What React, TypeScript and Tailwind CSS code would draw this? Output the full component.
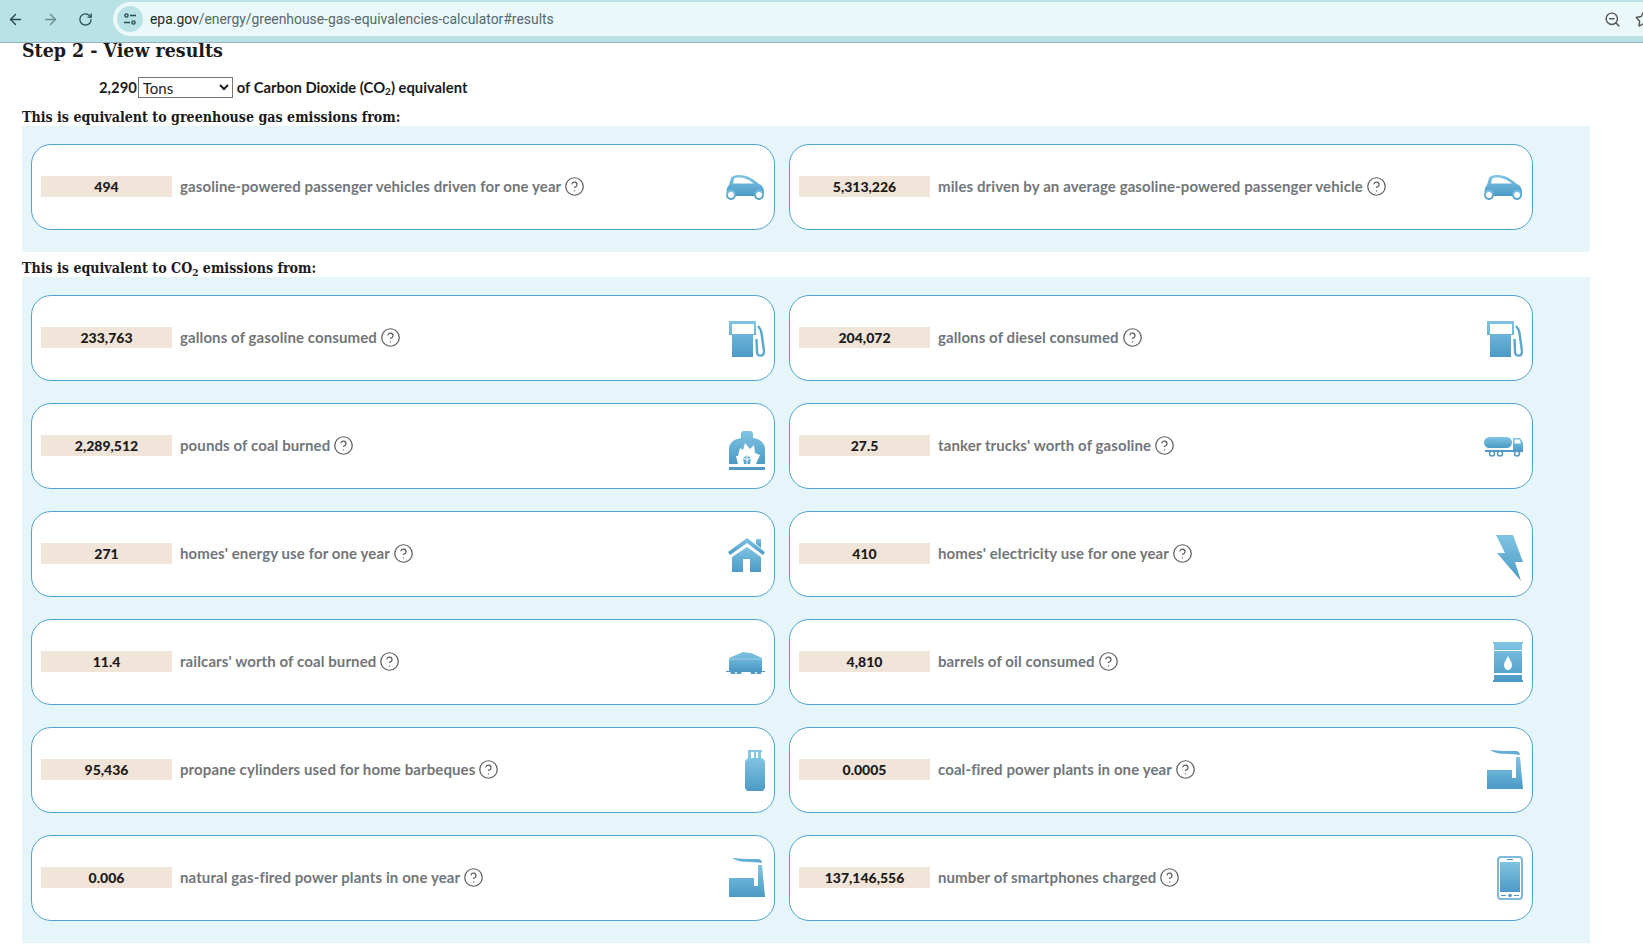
import React, { useId } from 'react';
import { ArrowLeft, ArrowRight, CircleHelp, RotateCw, Star, ZoomOut } from 'lucide-react';

type GlyphType = {
  w: number;
  h: number;
  className?: string;
  render: (fill: string) => React.ReactNode;
};

// every pictogram uses the same light-to-dark blue fade
const Glyph = (props: GlyphType) => {
  const { w, h, className, render } = props;
  const id = useId();
  return (
    <svg width={w} height={h} viewBox={`0 0 ${w} ${h}`} className={`ml-auto shrink-0 ${className ?? ''}`}>
      <defs>
        <linearGradient id={id} x1="0" y1="0" x2="0" y2="1">
          <stop offset="0" stopColor="#80c4e3" />
          <stop offset="1" stopColor="#4b9ac6" />
        </linearGradient>
      </defs>
      {render(`url(#${id})`)}
    </svg>
  );
};

const Car = () => (
  <Glyph
    w={39}
    h={25}
    className="mt-[3px]"
    render={(f) => (
      <>
        <path d="M1 21C0 15 1 12 3 10L5 3C6 1 9 0 13 0C22 0 27 4 33 9C36 10 38 13 38 17L38 20L36 21H3Z" fill={f} />
        <path d="M8 4C8 3 10 2.5 13 2.5C19 2.5 23 5 28 8.5L7 8.5Z" fill="#fff" />
        <circle cx="5" cy="20" r="5" fill={f} />
        <circle cx="5" cy="20" r="3" fill="#fff" />
        <circle cx="33" cy="20" r="5" fill={f} />
        <circle cx="33" cy="20" r="3" fill="#fff" />
      </>
    )}
  />
);

const Pump = () => (
  <Glyph
    w={36}
    h={37}
    className="mt-[5px]"
    render={(f) => (
      <>
        <path d="M0 0H27V14H24V36H3V14H0ZM3 3V13H25V3Z" fill={f} fillRule="evenodd" />
        <path d="M29 5C31 7 32 9 32.5 12L35 30C35.5 36 28 36 28 31L27.5 18" fill="none" stroke="#5ca5ce" strokeWidth="2.4" />
      </>
    )}
  />
);

const Fireplace = () => (
  <Glyph
    w={36}
    h={39}
    className="mt-[10px]"
    render={(f) => (
      <>
        <path d="M12 3C12 1 13 0 15 0H21C23 0 24 1 24 3V7C30 8 36 11 36 18V33H0V18C0 11 6 8 12 7Z" fill={f} />
        <rect x="0" y="36" width="36" height="3" fill="#5199c4" />
        <path d="M16 12L21 18L25 14L26 22L31 24L27 33H9L7 25L9 25L11 17L14 19Z" fill="#fff" />
        <path d="M18 24L22 27L21 33H15L14 27Z" fill={f} />
        <path d="M18 24V33M14 27L18 29L22 27" stroke="#fff" strokeWidth="1" fill="none" />
      </>
    )}
  />
);

const Truck = () => (
  <Glyph
    w={39}
    h={20}
    className="mt-[4px]"
    render={(f) => (
      <>
        <rect x="0" y="0" width="28" height="11" rx="5.5" fill={f} />
        <path d="M29 1H36L39 6V15H29Z" fill={f} />
        <path d="M30.5 2.5H35.5L37 6.5H30.5Z" fill="#fff" />
        <rect x="1" y="13" width="38" height="2" fill="#5199c4" />
        {[8, 16, 33].map((x) => (
          <g key={x}>
            <circle cx={x} cy="16.5" r="3.2" fill="#5199c4" />
            <circle cx={x} cy="16.5" r="1.7" fill="#fff" />
          </g>
        ))}
      </>
    )}
  />
);

const House = () => (
  <Glyph
    w={37}
    h={35}
    className="mt-[4px]"
    render={(f) => (
      <>
        <path d="M28 1H33V10L28 6Z" fill={f} />
        <path d="M0 14L19 0L37 14L35 17L19 5L2 17Z" fill={f} />
        <path d="M19 9L33 19V34H22V21H15V34H4V19Z" fill={f} />
      </>
    )}
  />
);

const Bolt = () => (
  <Glyph
    w={27}
    h={47}
    className="mt-[10px]"
    render={(f) => <path d="M0 0H17L27 27H19L25 46L1 18H9Z" fill={f} />}
  />
);

const Railcar = () => (
  <Glyph
    w={39}
    h={22}
    className="mt-[4px]"
    render={(f) => (
      <>
        <path d="M3 6L17 0L25 1L36 6V19H3Z" fill={f} />
        <path d="M3 7H36" stroke="#fff" strokeOpacity="0.35" strokeWidth="1" />
        <rect x="0" y="19" width="39" height="1" fill="#5199c4" />
        {[7, 13, 27, 33].map((x) => (
          <rect key={x} x={x - 2.5} y="20" width="5" height="2" rx="1" fill="#5199c4" />
        ))}
      </>
    )}
  />
);

const Barrel = () => (
  <Glyph
    w={30}
    h={40}
    className="mt-[2px]"
    render={(f) => (
      <>
        <path d="M0 0H30V2H29V8H1V2H0ZM1 9H29V31H1ZM1 33H29V38H30V40H0V38H1Z" fill={f} />
        <path d="M15 14C17 18 19 20 19 23C19 26 17 28 15 28C13 28 11 26 11 23C11 20 13 18 15 14Z" fill="#fff" />
      </>
    )}
  />
);

const Propane = () => (
  <Glyph
    w={20}
    h={41}
    className="mt-[2px]"
    render={(f) => (
      <>
        <path d="M3 0H17V2H16V8H13V2H11V8H9V2H6V8H3Z" fill="#86c6e3" />
        <path d="M5 8H15C18 8 20 10 20 13V38L18 41H2L0 38V13C0 10 2 8 5 8Z" fill={f} />
      </>
    )}
  />
);

const Factory = () => (
  <Glyph
    w={36}
    h={40}
    className="mt-[2px]"
    render={(f) => (
      <>
        <path d="M3 0C12 1 22 1 28 1C32 1 33 3 33 5C25 3 11 6 3 0Z" fill="#63aed6" />
        <path d="M0 20H25V28H29L29 7H33L36 39H0Z" fill={f} />
      </>
    )}
  />
);

const Phone = () => (
  <Glyph
    w={26}
    h={44}
    className="mt-[2px]"
    render={(f) => (
      <>
        <rect x="1" y="1" width="24" height="42" rx="3" fill="#fff" stroke="#7db9da" strokeWidth="2" />
        <rect x="3" y="6" width="20" height="30" fill={f} />
        <rect x="10" y="3" width="6" height="1" fill="#5199c4" />
        <rect x="4" y="39" width="5" height="1" fill="#5199c4" />
        <circle cx="13" cy="39.5" r="1.8" fill="#5199c4" />
        <rect x="17" y="39" width="5" height="1" fill="#5199c4" />
      </>
    )}
  />
);

type Row = { value: string; label: string; icon: React.ReactNode };

const ghgRows: Row[] = [
  { value: '494', label: 'gasoline-powered passenger vehicles driven for one year', icon: <Car /> },
  { value: '5,313,226', label: 'miles driven by an average gasoline-powered passenger vehicle', icon: <Car /> },
];

const co2Rows: Row[] = [
  { value: '233,763', label: 'gallons of gasoline consumed', icon: <Pump /> },
  { value: '204,072', label: 'gallons of diesel consumed', icon: <Pump /> },
  { value: '2,289,512', label: 'pounds of coal burned', icon: <Fireplace /> },
  { value: '27.5', label: "tanker trucks' worth of gasoline", icon: <Truck /> },
  { value: '271', label: "homes' energy use for one year", icon: <House /> },
  { value: '410', label: "homes' electricity use for one year", icon: <Bolt /> },
  { value: '11.4', label: "railcars' worth of coal burned", icon: <Railcar /> },
  { value: '4,810', label: 'barrels of oil consumed', icon: <Barrel /> },
  { value: '95,436', label: 'propane cylinders used for home barbeques', icon: <Propane /> },
  { value: '0.0005', label: 'coal-fired power plants in one year', icon: <Factory /> },
  { value: '0.006', label: 'natural gas-fired power plants in one year', icon: <Factory /> },
  { value: '137,146,556', label: 'number of smartphones charged', icon: <Phone /> },
];

const Panel = ({ rows }: { rows: Row[] }) => (
  <div className="w-[1568px] bg-[#e5f5fa] pl-[9px] pt-[18px] pb-[22px]">
    <div className="grid grid-cols-[744px_744px] gap-x-[14px] gap-y-[22px]">
      {rows.map((row) => (
        <div
          key={row.label}
          className="flex h-[86px] items-center rounded-[20px] border border-[#4fa3cf] bg-white pb-[2px] pl-[9px] pr-[9px]"
        >
          <div className="h-[21px] w-[131px] shrink-0 bg-[#f1e4d8] text-center text-[14px] leading-[21px] font-black text-[#1b1b1b]">
            {row.value}
          </div>
          <span className="ml-2 text-[15px] tracking-[0.1px] font-bold text-[#71767a]">{row.label}</span>
          <CircleHelp size={21} strokeWidth={1.4} className="mt-[1px] ml-[3px] shrink-0 text-[#5c5c5c]" />
          {row.icon}
        </div>
      ))}
    </div>
  </div>
);

const App = () => {
  return (
    <div className="h-[948px] w-[1643px] overflow-hidden bg-white font-['Lato','Noto_Sans',sans-serif]">
      <div className="flex h-[43px] items-start border-b border-[#8fb3b8] bg-[#b9e2e6] pt-[2px]">
        <div className="flex h-[34px] w-[113px] shrink-0 items-center text-[#2a4a4f]">
          <ArrowLeft size={17} className="ml-[7px]" />
          <ArrowRight size={17} className="ml-[18px] text-[#6f8a8e]" />
          <RotateCw size={15} className="ml-[19px]" />
        </div>
        <div className="flex h-[34px] flex-1 items-center rounded-l-[17px] bg-[#ebf8f9]">
          <div className="ml-[4px] flex h-[26px] w-[26px] items-center justify-center rounded-full bg-[#b9e2e6]">
            <svg width="14" height="12" viewBox="0 0 14 12" fill="none" stroke="#2a4a4f" strokeWidth="1.4">
              <circle cx="3.5" cy="2.5" r="1.6" />
              <path d="M7 2.5H13M1 9.5H7" />
              <circle cx="10.5" cy="9.5" r="1.6" />
            </svg>
          </div>
          <span className="ml-[7px] font-['Roboto',sans-serif] text-[13.9px] text-[#55696d]">
            <span className="text-[#1c2b2e]">epa.gov</span>/energy/greenhouse-gas-equivalencies-calculator#results
          </span>
          <ZoomOut size={17} className="ml-auto text-[#555]" />
          <Star size={17} className="mr-[-9px] ml-[14px] text-[#555]" />
        </div>
      </div>

      <div className="pl-[22px]">
        <h2 className="h-[27px] pt-[1px] font-['DejaVu_Serif_Condensed','DejaVu_Serif',serif] text-[19.4px] leading-[14px] font-bold text-[#1b1b1b]">
          Step 2 - View results
        </h2>
        <div className="flex h-[34px] items-center pl-[77px] text-[14.8px] font-bold text-[#1b1b1b]">
          <span>2,290</span>
          <select className="ml-[1px] h-[21px] w-[95px] border border-[#767676] bg-white text-[15px] font-normal">
            <option>Tons</option>
          </select>
          <span className="ml-1">
            of Carbon Dioxide (CO<sub className="text-[10px]">2</sub>) equivalent
          </span>
        </div>
        <div className="h-[22px] pt-[3px] font-['DejaVu_Serif_Condensed','DejaVu_Serif',serif] text-[14.1px] leading-[20px] font-bold text-[#1b1b1b]">
          This is equivalent to greenhouse gas emissions from:
        </div>
        <Panel rows={ghgRows} />
        <div className="h-[25px] pt-[4px] font-['DejaVu_Serif_Condensed','DejaVu_Serif',serif] text-[14.1px] leading-[25px] font-bold text-[#1b1b1b]">
          This is equivalent to CO<sub className="text-[10px]">2</sub> emissions from:
        </div>
        <Panel rows={co2Rows} />
      </div>
    </div>
  );
};

export default App;
